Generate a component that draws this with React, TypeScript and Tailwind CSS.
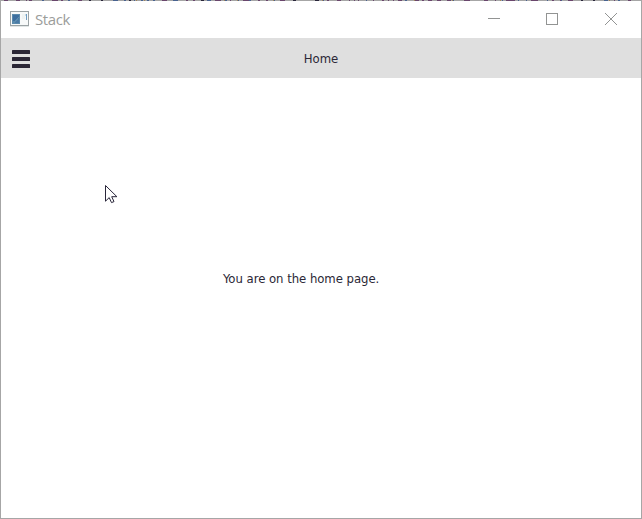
const P = "#69466c";
const B = "#48628f";
const D = "#29263a";
const O = "#a18357";

// [start, width, colour] of the marks along the window's top edge
const marks: [number, number, string][] = [
  [4, 4, P], [16, 4, P], [26, 1, P], [29, 3, P], [42, 2, B], [52, 6, P], [61, 2, P], [68, 2, B], [78, 4, P], [89, 2, D], [101, 2, D],
  [113, 5, B], [124, 2, B], [129, 2, D], [134, 1, B], [136, 1, O], [141, 2, B], [144, 1, O], [147, 2, B], [153, 2, B], [162, 5, P], [173, 5, B], [186, 2, P], [193, 2, P], [201, 3, D], [207, 4, B],
  [215, 6, P], [224, 1, O], [225, 2, B], [230, 1, P], [237, 1, O], [238, 1, B], [243, 6, P], [249, 2, B], [258, 2, P], [266, 2, P], [273, 1, O], [274, 1, B], [280, 5, P], [293, 3, D], [315, 4, D], [322, 1, O], [323, 1, B], [327, 2, P], [337, 4, P], [349, 1, P], [354, 1, P], [358, 1, P], [366, 1, B], [373, 1, P], [382, 2, P], [388, 1, P], [393, 1, P], [398, 4, P], [405, 2, B], [414, 1, O], [415, 4, P], [422, 2, P],
  [428, 4, P], [437, 4, P], [447, 4, P], [452, 1, O], [453, 1, B], [464, 6, P], [484, 4, P], [495, 1, P], [500, 1, O], [502, 1, B], [506, 9, P], [518, 1, B], [526, 1, B], [531, 7, P], [547, 1, B], [552, 2, P], [560, 1, P], [561, 1, B], [568, 5, P], [581, 2, D], [593, 2, D], [604, 4, B], [609, 1, O], [614, 1, P], [618, 2, B], [628, 3, P],
];

function Hamburger() {
  return (
    <div className="flex w-[18px] flex-col gap-[3px]">
      <span className="h-1 rounded-[0.5px] bg-[#2b2736]" />
      <span className="h-1 rounded-[0.5px] bg-[#2b2736]" />
      <span className="h-1 rounded-[0.5px] bg-[#2b2736]" />
    </div>
  );
}

function AppIcon() {
  return (
    <svg width="19" height="16" viewBox="0 0 19 16" shapeRendering="crispEdges">
      <rect x=".5" y=".5" width="18" height="14" fill="#f7f9f9" stroke="#9ba3a5" />
      <rect y="15" width="19" height="1" fill="#e1e6e6" />
      <rect x="2" y="3" width="8" height="10" fill="#5b8bad" />
      <path d="M3 4h6v2H8v1H7v1H6v1H5v1H3z" fill="#3d6f9f" />
      <path d="M9 7v5H5v-1h1v-1h1V9h1V7z" fill="#4a7aa6" />
      <path d="M12 3h3v5h-3z" fill="#eef3f3" />
      <path d="M15 3h1v2h-1z" fill="#c9dde8" />
      <path d="M16 3h1v6h-1z" fill="#6f9cc2" />
    </svg>
  );
}

export default function App() {
  return (
    <main className="relative flex h-[519px] w-[642px] flex-col overflow-hidden border border-t-0 border-[#a6a6a6] bg-white font-['DejaVu_Sans_Condensed','DejaVu_Sans',sans-serif] text-[#2b2736]">
      <svg className="-ml-px block h-px w-[642px] shrink-0 bg-[#a6a6a6]" viewBox="0 0 642 1" shapeRendering="crispEdges">
        {marks.map(([x, width, fill]) => <rect key={x} x={x} width={width} height="1" fill={fill} />)}
      </svg>
      <header className="flex h-[37px] shrink-0 items-start pl-[9px] text-[#9b9d9b]">
        <div className="pt-[10px]"><AppIcon /></div>
        <span className="ml-[6px] mt-[6px] font-['Open_Sans',sans-serif] text-[15px] font-normal leading-6 tracking-[-0.4px]">Stack</span>
        <svg className="ml-auto mr-6 mt-3" width="129" height="12" viewBox="0 0 129 12" fill="none" stroke="#929493" shapeRendering="crispEdges">
          <path d="M0 5.5h12M58.5.5h11v11h-11z" />
          <path d="m117 0 12 12m0-12-12 12" shapeRendering="auto" />
        </svg>
      </header>
      <nav className="grid h-10 shrink-0 grid-cols-[1fr_auto_1fr] items-center bg-[#dfdfdf] pl-[11px] pr-[11px]">
        <div className="pt-[2px]"><Hamburger /></div>
        <span className="pt-px text-[13px] leading-5 tracking-[-0.04px]">Home</span>
      </nav>
      <section className="flex flex-1 items-start pl-[222px] pt-[191px]">
        <p className="whitespace-nowrap text-[13px] leading-5 tracking-[-0.04px]">You are on the home page.</p>
      </section>
      <span className="absolute -left-px top-[206px] h-[25px] w-px bg-[#8c929f]" />
      <svg className="absolute left-[104px] top-[184px]" width="13" height="20" viewBox="0 0 13 20">
        <path d="M.5 1.5v15.7l3.7-3.6 2.3 5 2.5-1-2.3-4.9h5.2z" fill="white" stroke="#29263a" strokeWidth="1" />
      </svg>
    </main>
  );
}
